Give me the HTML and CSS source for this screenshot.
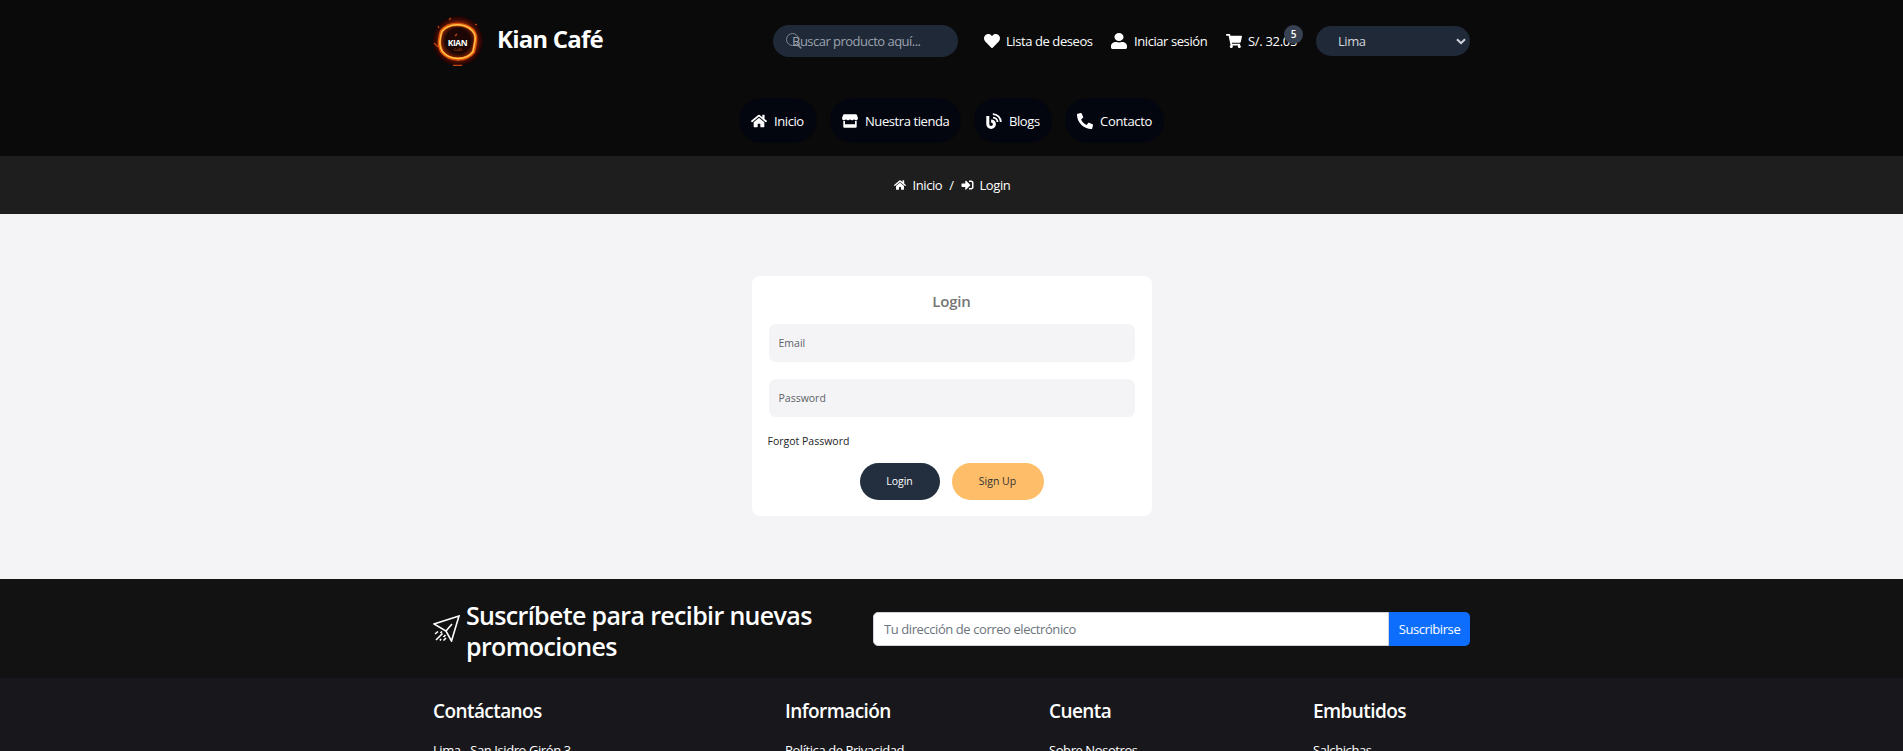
FILE: index.html
```html
<!DOCTYPE html>
<html lang="es">
<head>
<meta charset="utf-8">
<title>Kian Café - Login</title>
<link rel="stylesheet" href="styles.css">
</head>
<body>
<svg class="sprite" aria-hidden="true">
  <symbol id="heart" viewBox="0 0 512 512"><path d="M462.3 62.6C407.5 15.9 326 24.3 275.7 76.2L256 96.5l-19.7-20.3C186.1 24.3 104.5 15.9 49.7 62.6c-62.8 53.6-66.1 149.8-9.9 207.9l193.5 199.8c12.5 12.9 32.8 12.9 45.3 0l193.5-199.8c56.3-58.1 53-154.3-9.8-207.9z"/></symbol>
  <symbol id="user" viewBox="0 0 448 512" preserveAspectRatio="none"><path d="M224 256c70.7 0 128-57.3 128-128S294.7 0 224 0 96 57.3 96 128s57.3 128 128 128zm89.6 32h-16.7c-22.2 10.2-46.9 16-72.9 16s-50.6-5.8-72.9-16h-16.7C60.2 288 0 348.2 0 422.4V464c0 26.5 21.5 48 48 48h352c26.5 0 48-21.5 48-48v-41.6c0-74.2-60.2-134.4-134.4-134.4z"/></symbol>
  <symbol id="cart" viewBox="0 0 576 512"><path d="M528.12 301.319l47.273-208C578.806 78.301 567.391 64 551.99 64H159.208l-9.166-44.81C147.758 8.021 137.93 0 126.529 0H24C10.745 0 0 10.745 0 24v16c0 13.255 10.745 24 24 24h69.883l70.248 343.435C147.325 417.1 136 435.222 136 456c0 30.928 25.072 56 56 56s56-25.072 56-56c0-15.674-6.447-29.835-16.824-40h209.647C430.447 426.165 424 440.326 424 456c0 30.928 25.072 56 56 56s56-25.072 56-56c0-22.172-12.888-41.332-31.579-50.405l5.517-24.276c3.413-15.018-8.002-29.319-23.403-29.319H218.117l-6.545-32h293.145c11.206 0 20.92-7.754 23.403-18.681z"/></symbol>
  <symbol id="home" viewBox="0 0 576 512"><path d="M280.37 148.26L96 300.11V464a16 16 0 0 0 16 16l112.06-.29a16 16 0 0 0 15.92-16V368a16 16 0 0 1 16-16h64a16 16 0 0 1 16 16v95.64a16 16 0 0 0 16 16.05L464 480a16 16 0 0 0 16-16V300L295.67 148.26a12.19 12.19 0 0 0-15.3 0zM571.6 251.47L488 182.56V44.05a12 12 0 0 0-12-12h-56a12 12 0 0 0-12 12v72.61L318.47 43a48 48 0 0 0-61 0L4.34 251.47a12 12 0 0 0-1.6 16.9l25.5 31A12 12 0 0 0 45.15 301l235.22-193.74a12.19 12.19 0 0 1 15.3 0L530.9 301a12 12 0 0 0 16.9-1.6l25.5-31a12 12 0 0 0-1.7-16.93z"/></symbol>
  <symbol id="store" viewBox="0 0 16 16"><path d="M2.2 1.200h11.600q.7 0 1 .6l1 2.600c.5 1.300-.4 2.800-1.800 2.800-.8 0-1.500-.4-2-1-.9 1.300-3.100 1.300-4 0-.9 1.300-3.100 1.300-4 0-.5.6-1.200 1-2 1C.6 7.200-.3 5.700.2 4.400l1-2.600q.3-.6 1-.6zM1.300 8h1.700v3.300h10V8h1.700v5.800q0 1-1 1H2.300q-1 0-1-1z"/></symbol>
  <symbol id="blog" viewBox="0 0 16 16"><g fill="none" stroke="currentColor"><path stroke-width="3" d="M1.800 3v8.200a3.300 3.300 0 1 0 3.300-3.300"/><path stroke-width="1.800" d="M7 4.600a4.500 4.500 0 0 1 4.500 4.500M6.800 1.200a7.900 7.900 0 0 1 8 7.900"/></g></symbol>
  <symbol id="phone" viewBox="0 0 512 512"><path transform="matrix(-1 0 0 1 512 0)" d="M493.4 24.6l-104-24c-11.3-2.6-22.9 3.3-27.5 13.9l-48 112c-4.2 9.800-1.400 21.300 6.900 28l60.600 49.600c-36 76.700-98.900 140.500-177.200 177.200l-49.600-60.600c-6.800-8.300-18.200-11.100-28-6.900l-112 48C3.900 366.500-2 378.100.6 389.400l24 104C27.100 504.200 36.700 512 48 512c256.100 0 464-207.500 464-464 0-11.200-7.700-20.900-18.600-23.400z"/></symbol>
  <symbol id="signin" viewBox="0 0 512 512"><path d="M416 448h-84c-6.600 0-12-5.400-12-12v-40c0-6.600 5.400-12 12-12h84c17.700 0 32-14.300 32-32V160c0-17.700-14.300-32-32-32h-84c-6.600 0-12-5.400-12-12V76c0-6.600 5.400-12 12-12h84c53 0 96 43 96 96v192c0 53-43 96-96 96zm-47-201L201 79c-15-15-41-4.500-41 17v96H24c-13.300 0-24 10.700-24 24v96c0 13.300 10.700 24 24 24h136v96c0 21.500 26 32 41 17l168-168c9.300-9.400 9.300-24.600 0-34z"/></symbol>
</svg>

<header class="header">
  <div class="container topbar">
    <a class="brand">
      <svg class="logo" viewBox="0 0 50 50">
        <defs>
          <radialGradient id="glow"><stop offset=".5" stop-color="#1c0705"/><stop offset=".72" stop-color="#8a2504"/><stop offset=".86" stop-color="#3d0a04"/><stop offset="1" stop-color="#190303"/></radialGradient>
        </defs>
        <circle cx="25" cy="25" r="25" fill="url(#glow)"/>
        <path d="M8.500 15Q14 8.500 24 8.500T40 14.500Q43.500 19 42.500 25T40.500 36Q35 43 25 43T9 36Q6 31 6.500 25T8.500 15z" fill="none" stroke="#e0560c" stroke-width="3.400"/>
        <path d="M9 15.500Q14 9 24 8.700T39.500 15Q43 19 42 25T40 35.500Q35 42.500 25 42.500T9.500 35.500Q6.500 31 7 25T9 15.500z" fill="none" stroke="#ffc445" stroke-width="1.500"/>
        <path d="M16 4l2-2M6 12l-1-2M42 8l2 1M1 27l4 4M20 49.300h9M22 20l2-2" stroke="#c2480c" stroke-width="1.200"/>
        <text x="24.500" y="30" class="logo-name">KIAN</text>
        <text x="25" y="34.500" class="logo-sub">Café</text>
      </svg>
      <span class="brand-name">Kian Café</span>
    </a>
    <div class="search">
      <svg class="search-icon" viewBox="0 0 16 16"><circle cx="6.500" cy="6.500" r="6" fill="none" stroke="currentColor"/><path d="M11 11l4.300 4.300" stroke="currentColor" stroke-width="1.800"/></svg>
      <span class="search-text">Buscar producto aquí...</span>
    </div>
    <a class="link wishes"><svg class="ico"><use href="#heart"/></svg><span>Lista de deseos</span></a>
    <a class="link account"><svg class="ico"><use href="#user"/></svg><span>Iniciar sesión</span></a>
    <a class="link cart"><svg class="ico"><use href="#cart"/></svg><span>S/. 32.05</span><b class="badge">5</b></a>
    <div class="city"><span>Lima</span><svg viewBox="0 0 10 7"><path d="M1 1.200l4 4 4-4" fill="none" stroke="currentColor" stroke-width="2"/></svg></div>
  </div>
  <nav class="nav">
    <a class="pill home"><svg class="ico"><use href="#home"/></svg><span>Inicio</span></a>
    <a class="pill shop"><svg class="ico"><use href="#store"/></svg><span>Nuestra tienda</span></a>
    <a class="pill blogs"><svg class="ico"><use href="#blog"/></svg><span>Blogs</span></a>
    <a class="pill contact"><svg class="ico"><use href="#phone"/></svg><span>Contacto</span></a>
  </nav>
</header>

<div class="crumbs">
  <svg class="ico"><use href="#home"/></svg><span class="crumb">Inicio</span><span class="slash">/</span><svg class="ico signin"><use href="#signin"/></svg><span class="crumb">Login</span>
</div>

<main class="main">
  <form class="card">
    <h3 class="card-title">Login</h3>
    <input class="field" type="email" placeholder="Email">
    <input class="field" type="password" placeholder="Password">
    <a class="forgot">Forgot Password</a>
    <div class="actions"><a class="btn login">Login</a><a class="btn signup">Sign Up</a></div>
  </form>
</main>

<section class="subscribe">
  <div class="container subscribe-row">
    <svg class="plane" viewBox="0 0 27 27"><path d="M1 9L26 1 18.500 26 13 16zM13 16l6-7M9 16.500l-1.500 1.500M5 16.500L2 19M9.500 18.500l-6.500 6.500M12.500 20l-2 2M8 24l-1 1.500M13 23l-2.500 2.500" fill="none" stroke="currentColor" stroke-width="1.600"/></svg>
    <h2 class="subscribe-title">Suscríbete para recibir nuevas promociones</h2>
    <div class="group"><input class="mail" type="text" placeholder="Tu dirección de correo electrónico"><span class="send">Suscribirse</span></div>
  </div>
</section>

<footer class="footer">
  <div class="container footer-grid">
    <div><h4>Contáctanos</h4><p>Lima - San Isidro Girón 3</p></div>
    <div><h4>Información</h4><p>Política de Privacidad</p></div>
    <div><h4>Cuenta</h4><p>Sobre Nosotros</p></div>
    <div><h4>Embutidos</h4><p>Salchichas</p></div>
  </div>
</footer>
</body>
</html>
```
FILE: styles.css
```css
* { box-sizing: border-box; }
body {
  margin: 0;
  height: 751px;
  overflow: hidden;
  font: 13px/20px "Open Sans", "Noto Sans", sans-serif;
  letter-spacing: -0.42px;
  color: #fff;
  background: #18181c;
}
h2, h3, h4, p { margin: 0; }
.sprite { position: absolute; width: 0; height: 0; }
.container { width: 1037px; margin: 0 auto; }
.ico { width: 16px; height: 16px; fill: currentColor; flex: none; }
span, a, h2, h3, h4, p { white-space: nowrap; }

.header { height: 156px; background: #0a0a0a; }
.topbar { display: flex; align-items: center; height: 82px; }
.brand { display: flex; align-items: center; width: 340px; }
.logo { width: 50px; height: 50px; margin-left: 0; }
.logo-name { font: 700 8.5px "Open Sans", sans-serif; fill: #fff; text-anchor: middle; letter-spacing: -.4px; }
.logo-sub { font: 4px "Open Sans", sans-serif; fill: #c2541a; text-anchor: middle; letter-spacing: 0; }
.brand-name { margin: -5px 0 0 14px; font-size: 24px; line-height: 30px; font-weight: 700; letter-spacing: -0.8px; }
.search { display: flex; align-items: center; width: 185px; height: 32px; border-radius: 16px; background: #1f2937; color: #7d8590; }
.search-icon { width: 16px; height: 16px; margin: 0 -10px 0 13px; }
.search-text { color: #9ca3af; letter-spacing: -0.52px; }
.link { position: relative; display: flex; align-items: center; gap: 6px; }
.wishes { width: 127px; margin-left: 26px; }
.account { width: 115px; gap: 7px; }
.cart { width: 90px; letter-spacing: -0.3px; }
.badge { position: absolute; left: 58px; top: -6px; width: 19px; height: 19px; border-radius: 50%; background: #374151; font-size: 10px; font-weight: 600; line-height: 19px; text-align: center; }
.city { display: flex; align-items: center; justify-content: space-between; width: 154px; height: 30px; padding: 0 4px 0 22px; border-radius: 15px; background: #1f2937; color: #d1d5db; }
.city svg { width: 10px; height: 7px; }

.nav { display: flex; justify-content: center; gap: 13px; padding-top: 16px; }
.pill { display: flex; align-items: center; gap: 7px; height: 45px; padding-left: 12px; border-radius: 24px; background: #03060f; }
.home { width: 78px; }
.shop { width: 131px; }
.blogs { width: 78px; }
.contact { width: 99px; letter-spacing: -0.3px; }

.crumbs { display: flex; align-items: center; justify-content: center; height: 58px; background: #1e1e1e; }
.crumbs .ico { width: 12px; height: 12px; margin-right: 7px; }
.crumbs .signin { width: 13px; margin-right: 6px; }
.crumb { width: 30px; }
.slash { width: 18px; text-align: center; }

.main { height: 365px; padding-top: 62px; background: #f4f4f6; }
.card { display: flex; flex-direction: column; width: 400px; height: 240px; margin: 0 auto; padding: 16px 17px; border-radius: 8px; background: #fff; }
.card-title { height: 32px; font-size: 15px; font-weight: 600; line-height: 19px; text-align: center; color: #757575; letter-spacing: -0.2px; }
.field { width: 366px; height: 38px; margin-bottom: 17px; padding: 0 10px; border: 0; border-radius: 7px; background: #f4f4f6; font: 10.5px "Open Sans", sans-serif; color: #444; }
.field::placeholder { color: #5d6168; }
.forgot { margin: -3px 0 12px -1px; font-size: 10.5px; line-height: 20px; color: #222; letter-spacing: 0; }
.actions { display: flex; justify-content: center; gap: 12px; }
.btn { height: 37px; border-radius: 19px; font-size: 10.5px; line-height: 37px; text-align: center; letter-spacing: 0; }
.login { width: 80px; background: #232f3e; }
.signup { width: 92px; background: #febd69; color: #333; }

.subscribe { height: 99px; background: #121212; }
.subscribe-row { display: flex; align-items: center; height: 99px; }
.plane { width: 27px; height: 27px; margin-right: 6px; }
.subscribe-title { width: 407px; margin-top: 4px; padding-right: 50px; font-size: 25px; line-height: 31px; font-weight: 600; letter-spacing: -0.65px; white-space: normal; }
.group { display: flex; flex: 1; height: 34px; }
.mail { flex: 1; min-width: 0; border: 1px solid #ced4da; border-radius: 5px 0 0 5px; padding: 0 10px; background: #fff; font: 13px "Open Sans", sans-serif; letter-spacing: -0.42px; }
.mail::placeholder { color: #6c757d; }
.send { width: 81px; border-radius: 0 5px 5px 0; background: #0d6efd; line-height: 34px; text-align: center; }

.footer { height: 73px; padding-top: 20px; overflow: hidden; }
.footer-grid { display: grid; grid-template-columns: 352px 264px 264px 157px; }
.footer h4 { font-size: 19px; line-height: 26px; font-weight: 600; letter-spacing: -0.58px; }
.footer p { margin-top: 16px; }
```
